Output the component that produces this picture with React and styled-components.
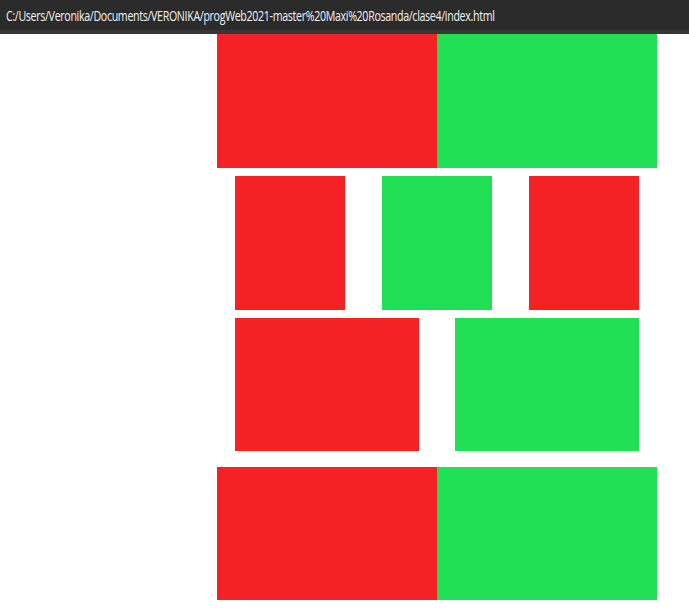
import styled, { createGlobalStyle } from "styled-components";

const GlobalStyle = createGlobalStyle`
  html, body {
    margin: 0;
    padding: 0;
    background: #ffffff;
  }
`;

const TitleBar = styled.div`
  height: 30px;
  background-color: #2b2b2b;
  border-bottom: 4px solid #363636;
  display: flex;
  align-items: center;
  padding-left: 6px;
  white-space: nowrap;
  overflow: hidden;
`;

const Path = styled.span`
  display: inline-block;
  color: #f2f2f2;
  font-family: "Open Sans", "Noto Sans", sans-serif;
  font-size: 14.5px;
  letter-spacing: -0.45px;
  transform: scaleX(0.735);
  transform-origin: left center;
`;

const Page = styled.div`
  width: 440px;
  margin-left: 217px;
  display: flex;
  flex-direction: column;
`;

const Row = styled.div`
  display: flex;
  justify-content: space-between;
  padding: 0 ${(p) => p.$inset || 0}px;
  margin-top: ${(p) => p.$top || 0}px;
`;

const Box = styled.div`
  width: ${(p) => p.$w}px;
  height: ${(p) => p.$h || 134}px;
  background-color: ${(p) => (p.$green ? "#22e055" : "#f42224")};
`;

export default function App() {
  return (
    <>
      <GlobalStyle />
      <TitleBar>
        <Path>
          C:/Users/Veronika/Documents/VERONIKA/progWeb2021-master%20Maxi%20Rosanda/clase4/index.html
        </Path>
      </TitleBar>
      <Page>
        <Row>
          <Box $w={220} />
          <Box $w={220} $green />
        </Row>
        <Row $inset={18} $top={8}>
          <Box $w={110} />
          <Box $w={110} $green />
          <Box $w={110} />
        </Row>
        <Row $inset={18} $top={8}>
          <Box $w={184} $h={133} />
          <Box $w={184} $h={133} $green />
        </Row>
        <Row $top={16}>
          <Box $w={220} $h={133} />
          <Box $w={220} $h={133} $green />
        </Row>
      </Page>
    </>
  );
}
